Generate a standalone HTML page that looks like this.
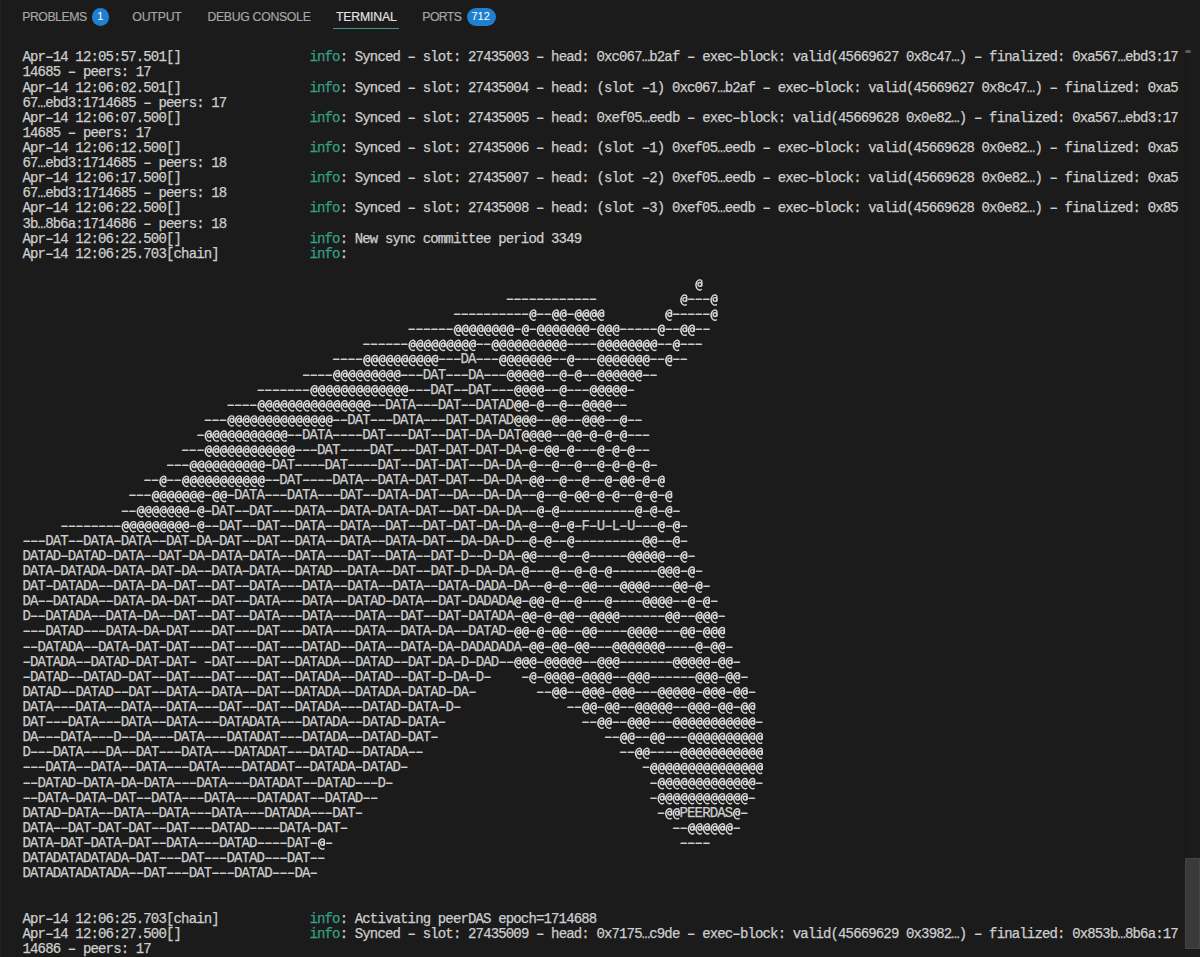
<!DOCTYPE html>
<html><head><meta charset="utf-8">
<style>
html,body{margin:0;padding:0;}
body{width:1200px;height:957px;background:#1b1b1b;position:relative;overflow:hidden;}
.tabs{position:absolute;left:0;top:0;width:1200px;height:40px;font-family:"Liberation Sans",sans-serif;font-size:12.3px;color:#a8a8a8;}
.tab{position:absolute;top:10px;line-height:14px;white-space:nowrap;-webkit-text-stroke:0.15px currentColor;}
.tab.act{color:#e4e4e4;}
.ul{position:absolute;left:333px;top:27.5px;width:66px;height:1.3px;background:#3a9e8c;}
.badge{position:absolute;top:8px;height:17.5px;border-radius:9px;background:#1f7fd0;color:#fff;font-family:"Liberation Sans",sans-serif;font-size:11px;line-height:17.5px;text-align:center;}
pre{position:absolute;left:22.5px;top:50.3px;margin:0;font-family:"Liberation Mono",monospace;font-size:14px;letter-spacing:-0.851px;line-height:15.11px;color:#cecece;white-space:pre;-webkit-text-stroke:0.25px currentColor;}
.i{color:#33a083;}
i{font-style:normal;text-shadow:0 -1px 0 rgba(206,206,206,0.5);}
.vl{position:absolute;left:1185px;top:49px;width:1px;height:810px;background:#141414;}
.mk{position:absolute;left:1185px;top:49.5px;width:6px;height:3.5px;border-radius:2px;background:#5a5a5a;}
.thumb{position:absolute;left:1185px;top:858px;width:15px;height:91px;background:#3a3a3a;box-shadow:inset 0 0 0 1px #444;}
</style></head><body>
<div class="tabs">
<div class="tab" style="left:22.2px;letter-spacing:-0.48px">PROBLEMS</div>
<div class="badge" style="left:91.5px;width:17.5px">1</div>
<div class="tab" style="left:132.3px;letter-spacing:-0.2px">OUTPUT</div>
<div class="tab" style="left:207.4px;letter-spacing:-0.32px">DEBUG CONSOLE</div>
<div class="tab act" style="left:336px;letter-spacing:-0.2px">TERMINAL</div>
<div class="ul"></div>
<div class="tab" style="left:422.3px;letter-spacing:-0.62px">PORTS</div>
<div class="badge" style="left:466.7px;width:29px;text-indent:-1px">712</div>
</div>
<div class="vl"></div>
<div style="position:absolute;left:0;top:0;width:1px;height:957px;background:#212121"></div>
<div class="mk"></div>
<div class="thumb"></div>
<pre>Apr<i>–</i>14 12:05:57.501[]                 <span class="i">info</span>: Synced <i>–</i> slot: 27435003 <i>–</i> head: 0xc067…b2af <i>–</i> exec<i>–</i>block: valid(45669627 0x8c47…) <i>–</i> finalized: 0xa567…ebd3:17
14685 <i>–</i> peers: 17
Apr<i>–</i>14 12:06:02.501[]                 <span class="i">info</span>: Synced <i>–</i> slot: 27435004 <i>–</i> head: (slot <i>–</i>1) 0xc067…b2af <i>–</i> exec<i>–</i>block: valid(45669627 0x8c47…) <i>–</i> finalized: 0xa5
67…ebd3:1714685 <i>–</i> peers: 17
Apr<i>–</i>14 12:06:07.500[]                 <span class="i">info</span>: Synced <i>–</i> slot: 27435005 <i>–</i> head: 0xef05…eedb <i>–</i> exec<i>–</i>block: valid(45669628 0x0e82…) <i>–</i> finalized: 0xa567…ebd3:17
14685 <i>–</i> peers: 17
Apr<i>–</i>14 12:06:12.500[]                 <span class="i">info</span>: Synced <i>–</i> slot: 27435006 <i>–</i> head: (slot <i>–</i>1) 0xef05…eedb <i>–</i> exec<i>–</i>block: valid(45669628 0x0e82…) <i>–</i> finalized: 0xa5
67…ebd3:1714685 <i>–</i> peers: 18
Apr<i>–</i>14 12:06:17.500[]                 <span class="i">info</span>: Synced <i>–</i> slot: 27435007 <i>–</i> head: (slot <i>–</i>2) 0xef05…eedb <i>–</i> exec<i>–</i>block: valid(45669628 0x0e82…) <i>–</i> finalized: 0xa5
67…ebd3:1714685 <i>–</i> peers: 18
Apr<i>–</i>14 12:06:22.500[]                 <span class="i">info</span>: Synced <i>–</i> slot: 27435008 <i>–</i> head: (slot <i>–</i>3) 0xef05…eedb <i>–</i> exec<i>–</i>block: valid(45669628 0x0e82…) <i>–</i> finalized: 0x85
3b…8b6a:1714686 <i>–</i> peers: 18
Apr<i>–</i>14 12:06:22.500[]                 <span class="i">info</span>: New sync committee period 3349
Apr<i>–</i>14 12:06:25.703[chain]            <span class="i">info</span>:

                                                                                          
                                                                <i>––––––––––––</i>            <i>–––</i> 
                                                         <i>––––––––––</i> <i>––</i>  <i>–</i>             <i>–––––</i> 
                                                   <i>––––––</i>        <i>–</i> <i>–</i>       <i>–</i>   <i>–––––</i> <i>––</i>  <i>––</i>
                                             <i>––––––</i>         <i>––</i>          <i>––––</i>        <i>––</i> <i>–––</i>
                                         <i>––––</i>          <i>–––</i>DA<i>–––</i>       <i>––</i> <i>–––</i>       <i>––</i> <i>––</i>
                                     <i>––––</i>         <i>–––</i>DAT<i>–––</i>DA<i>–––</i>     <i>––</i> <i>–</i> <i>––</i>      <i>––</i>
                               <i>–––––––</i>             <i>–––</i>DAT<i>––</i>DAT<i>–––</i>    <i>––</i> <i>–––</i>     <i>–</i>
                           <i>––––</i>               <i>––</i>DATA<i>–––</i>DAT<i>––</i>DATAD  <i>–</i> <i>––</i> <i>––</i>    <i>––</i>
                        <i>–––</i>              <i>––</i>DAT<i>–––</i>DATA<i>–––</i>DAT<i>–</i>DATAD   <i>––</i>  <i>––</i>   <i>––</i> <i>––</i>
                       <i>–</i>           <i>––</i>DATA<i>––––</i>DAT<i>–––</i>DAT<i>––</i>DAT<i>–</i>DA<i>–</i>DAT    <i>––</i>  <i>–</i> <i>–</i> <i>–</i> <i>–––</i>
                     <i>–––</i>            <i>–––</i>DAT<i>––––</i>DAT<i>–––</i>DAT<i>–</i>DAT<i>–</i>DAT<i>–</i>DA<i>–</i> <i>–</i>  <i>–</i> <i>–––</i> <i>–</i> <i>–</i> <i>––</i>
                   <i>–––</i>          <i>–</i>DAT<i>––––</i>DAT<i>––––</i>DAT<i>––</i>DAT<i>–</i>DAT<i>––</i>DA<i>–</i>DA<i>–</i> <i>––</i> <i>––</i> <i>––</i> <i>–</i> <i>–</i> <i>–</i> <i>–</i>
                <i>––</i> <i>––</i>           <i>––</i>DAT<i>––––</i>DATA<i>––</i>DATA<i>–</i>DAT<i>–</i>DAT<i>––</i>DA<i>–</i>DA<i>–</i>  <i>––</i> <i>––</i> <i>––</i> <i>–</i>  <i>–</i> <i>–</i> 
              <i>–––</i>       <i>–</i>  <i>–</i>DATA<i>–––</i>DATA<i>–––</i>DAT<i>––</i>DATA<i>–</i>DAT<i>––</i>DA<i>––</i>DA<i>–</i>DA<i>––</i> <i>––</i> <i>–</i>  <i>–</i> <i>–</i> <i>––</i> <i>–</i> <i>–</i> 
             <i>––</i>       <i>–</i> <i>–</i>DAT<i>––</i>DAT<i>–––</i>DATA<i>––</i>DATA<i>–</i>DATA<i>–</i>DAT<i>––</i>DAT<i>–</i>DA<i>–</i>DA<i>––</i> <i>–</i> <i>––––––––––</i> <i>–</i> <i>–</i> <i>–</i>
     <i>––––––––</i>         <i>–</i> <i>––</i>DAT<i>––</i>DAT<i>––</i>DATA<i>––</i>DATA<i>––</i>DAT<i>––</i>DAT<i>–</i>DAT<i>–</i>DA<i>–</i>DA<i>–</i> <i>––</i> <i>–</i> <i>–</i>F<i>–</i>U<i>–</i>L<i>–</i>U<i>–––</i> <i>–</i> <i>–</i>
<i>–––</i>DAT<i>––</i>DATA<i>–</i>DATA<i>––</i>DAT<i>–</i>DA<i>–</i>DAT<i>––</i>DAT<i>––</i>DATA<i>––</i>DATA<i>––</i>DATA<i>–</i>DAT<i>––</i>DA<i>–</i>DA<i>–</i>D<i>––</i> <i>–</i> <i>––</i> <i>–––––––––</i>  <i>––</i> <i>–</i>
DATAD<i>–</i>DATAD<i>–</i>DATA<i>––</i>DAT<i>–</i>DA<i>–</i>DATA<i>–</i>DATA<i>––</i>DATA<i>–––</i>DAT<i>––</i>DATA<i>––</i>DAT<i>–</i>D<i>––</i>D<i>–</i>DA<i>–</i>  <i>–––</i> <i>––</i> <i>–––––</i>     <i>––</i> <i>–</i>
DATA<i>–</i>DATADA<i>–</i>DATA<i>–</i>DAT<i>–</i>DA<i>––</i>DATA<i>–</i>DATA<i>––</i>DATAD<i>––</i>DATA<i>––</i>DAT<i>––</i>DAT<i>–</i>D<i>–</i>DA<i>–</i>DA<i>–</i> <i>–––</i> <i>––</i> <i>–</i> <i>–</i> <i>––––––</i>   <i>–</i> <i>–</i>
DAT<i>–</i>DATADA<i>––</i>DATA<i>–</i>DA<i>–</i>DAT<i>––</i>DAT<i>––</i>DATA<i>–––</i>DATA<i>––</i>DATA<i>––</i>DATA<i>––</i>DATA<i>–</i>DADA<i>–</i>DA<i>––</i> <i>–</i> <i>––</i>  <i>–––</i>    <i>–––</i>  <i>–</i> <i>–</i>
DA<i>––</i>DATADA<i>––</i>DATA<i>–</i>DA<i>–</i>DAT<i>––</i>DAT<i>––</i>DATA<i>–––</i>DATA<i>––</i>DATAD<i>–</i>DATA<i>––</i>DAT<i>–</i>DADADA <i>–</i>  <i>–</i> <i>––</i> <i>–––</i> <i>––––</i>    <i>––</i> <i>–</i> <i>–</i>
D<i>––</i>DATADA<i>––</i>DATA<i>–</i>DA<i>––</i>DAT<i>––</i>DAT<i>––</i>DATA<i>–––</i>DATA<i>–––</i>DATA<i>––</i>DAT<i>––</i>DAT<i>–</i>DATADA<i>–</i>  <i>–</i> <i>–</i>  <i>––</i>    <i>––––––</i>  <i>––</i>   <i>–</i>
<i>–––</i>DATAD<i>–––</i>DATA<i>–</i>DA<i>–</i>DAT<i>–––</i>DAT<i>–––</i>DAT<i>–––</i>DATA<i>–––</i>DATA<i>––</i>DATA<i>–</i>DA<i>––</i>DATAD<i>–</i>  <i>–</i> <i>–</i>  <i>––</i>  <i>––––</i>    <i>–––</i>  <i>–</i>   
<i>––</i>DATADA<i>––</i>DATA<i>–</i>DAT<i>–</i>DAT<i>–––</i>DAT<i>–––</i>DAT<i>–––</i>DATAD<i>––</i>DATA<i>––</i>DATA<i>–</i>DA<i>–</i>DADADADA<i>–</i>  <i>–</i>  <i>–</i>  <i>–––</i>       <i>––––</i> <i>–</i>  <i>–</i>
<i>–</i>DATADA<i>––</i>DATAD<i>–</i>DAT<i>–</i>DAT<i>–</i> <i>–</i>DAT<i>–––</i>DAT<i>––</i>DATADA<i>––</i>DATAD<i>––</i>DAT<i>–</i>DA<i>–</i>D<i>–</i>DAD<i>––</i>   <i>–</i>     <i>––</i>   <i>–––––––</i>     <i>–</i>  <i>–</i>
<i>–</i>DATAD<i>––</i>DATAD<i>–</i>DAT<i>––</i>DAT<i>–––</i>DAT<i>–––</i>DAT<i>––</i>DATADA<i>––</i>DATAD<i>––</i>DAT<i>–</i>D<i>–</i>DA<i>–</i>D<i>–</i>    <i>–</i> <i>–</i>    <i>–</i>    <i>––</i>   <i>––––––</i>   <i>–</i>  <i>–</i>
DATAD<i>––</i>DATAD<i>––</i>DAT<i>––</i>DATA<i>––</i>DATA<i>––</i>DAT<i>––</i>DATADA<i>––</i>DATADA<i>–</i>DATAD<i>–</i>DA<i>–</i>        <i>––</i>  <i>––</i>   <i>–</i>   <i>–––</i>     <i>–</i>   <i>–</i>  <i>–</i>
DATA<i>–––</i>DATA<i>––</i>DATA<i>––</i>DATA<i>–––</i>DAT<i>––</i>DAT<i>––</i>DATADA<i>–––</i>DATAD<i>–</i>DATA<i>–</i>D<i>–</i>              <i>––</i>  <i>–</i>  <i>––</i>     <i>––</i>   <i>–</i>  <i>–</i>  
DAT<i>–––</i>DATA<i>–––</i>DATA<i>––</i>DATA<i>–––</i>DATADATA<i>–––</i>DATADA<i>––</i>DATAD<i>–</i>DATA<i>–</i>                  <i>––</i>  <i>––</i>   <i>–––</i>           <i>–</i>
DA<i>–––</i>DATA<i>–––</i>D<i>––</i>DA<i>–––</i>DATA<i>–––</i>DATADAT<i>–––</i>DATADA<i>––</i>DATAD<i>–</i>DAT<i>–</i>                      <i>––</i>  <i>––</i>  <i>–––</i>          
D<i>–––</i>DATA<i>–––</i>DA<i>––</i>DAT<i>–––</i>DATA<i>–––</i>DATADAT<i>–––</i>DATAD<i>––</i>DATADA<i>––</i>                          <i>––</i>  <i>––––</i>           
<i>–––</i>DATA<i>––</i>DATA<i>––</i>DATA<i>–––</i>DATA<i>–––</i>DATADAT<i>––</i>DATADA<i>–</i>DATAD<i>–</i>                               <i>–</i>               
<i>––</i>DATAD<i>–</i>DATA<i>–</i>DA<i>–</i>DATA<i>–––</i>DATA<i>–––</i>DATADAT<i>––</i>DATAD<i>–––</i>D<i>–</i>                                  <i>–</i>             <i>–</i>
<i>––</i>DATA<i>–</i>DATA<i>–</i>DAT<i>––</i>DATA<i>–––</i>DATA<i>–––</i>DATADAT<i>––</i>DATAD<i>––</i>                                    <i>–</i>            <i>–</i>
DATAD<i>–</i>DATA<i>––</i>DATA<i>––</i>DATA<i>–––</i>DATA<i>–––</i>DATADA<i>–––</i>DAT<i>–</i>                                       <i>–</i>  PEERDAS <i>–</i>
DATA<i>––</i>DAT<i>–</i>DAT<i>–</i>DAT<i>––</i>DAT<i>–––</i>DATAD<i>––––</i>DATA<i>–</i>DAT<i>–</i>                                           <i>––</i>      <i>–</i>
DATA<i>–</i>DAT<i>–</i>DATA<i>–</i>DAT<i>––</i>DATA<i>–––</i>DATAD<i>––––</i>DAT<i>–</i> <i>–</i>                                              <i>––––</i>
DATADATADATADA<i>–</i>DAT<i>–––</i>DAT<i>–––</i>DATAD<i>–––</i>DAT<i>––</i>
DATADATADATADA<i>––</i>DAT<i>–––</i>DAT<i>–––</i>DATAD<i>–––</i>DA<i>–</i>


Apr<i>–</i>14 12:06:25.703[chain]            <span class="i">info</span>: Activating peerDAS epoch=1714688
Apr<i>–</i>14 12:06:27.500[]                 <span class="i">info</span>: Synced <i>–</i> slot: 27435009 <i>–</i> head: 0x7175…c9de <i>–</i> exec<i>–</i>block: valid(45669629 0x3982…) <i>–</i> finalized: 0x853b…8b6a:17
14686 <i>–</i> peers: 17</pre>
<svg style="position:absolute;left:22.5px;top:276.95px;overflow:visible" width="800" height="620"><defs><g id="a" fill="none" stroke="#d8d8d8" stroke-width="1.4"><path d="M6.9 3.6A3.75 5.1 0 1 0 6.9 12.3"/><circle cx="5.0" cy="7.4" r="1.85"/><path d="M6.9 3.6V9.3"/></g></defs><use href="#a" x="671.86" y="0.00"/><use href="#a" x="656.76" y="15.11"/><use href="#a" x="686.96" y="15.11"/><use href="#a" x="505.78" y="30.22"/><use href="#a" x="528.43" y="30.22"/><use href="#a" x="535.98" y="30.22"/><use href="#a" x="551.08" y="30.22"/><use href="#a" x="558.63" y="30.22"/><use href="#a" x="566.18" y="30.22"/><use href="#a" x="573.72" y="30.22"/><use href="#a" x="641.67" y="30.22"/><use href="#a" x="686.96" y="30.22"/><use href="#a" x="430.29" y="45.33"/><use href="#a" x="437.84" y="45.33"/><use href="#a" x="445.39" y="45.33"/><use href="#a" x="452.94" y="45.33"/><use href="#a" x="460.49" y="45.33"/><use href="#a" x="468.04" y="45.33"/><use href="#a" x="475.59" y="45.33"/><use href="#a" x="483.14" y="45.33"/><use href="#a" x="498.23" y="45.33"/><use href="#a" x="513.33" y="45.33"/><use href="#a" x="520.88" y="45.33"/><use href="#a" x="528.43" y="45.33"/><use href="#a" x="535.98" y="45.33"/><use href="#a" x="543.53" y="45.33"/><use href="#a" x="551.08" y="45.33"/><use href="#a" x="558.63" y="45.33"/><use href="#a" x="573.72" y="45.33"/><use href="#a" x="581.27" y="45.33"/><use href="#a" x="588.82" y="45.33"/><use href="#a" x="634.12" y="45.33"/><use href="#a" x="656.76" y="45.33"/><use href="#a" x="664.31" y="45.33"/><use href="#a" x="385.00" y="60.44"/><use href="#a" x="392.55" y="60.44"/><use href="#a" x="400.10" y="60.44"/><use href="#a" x="407.65" y="60.44"/><use href="#a" x="415.19" y="60.44"/><use href="#a" x="422.74" y="60.44"/><use href="#a" x="430.29" y="60.44"/><use href="#a" x="437.84" y="60.44"/><use href="#a" x="445.39" y="60.44"/><use href="#a" x="468.04" y="60.44"/><use href="#a" x="475.59" y="60.44"/><use href="#a" x="483.14" y="60.44"/><use href="#a" x="490.69" y="60.44"/><use href="#a" x="498.23" y="60.44"/><use href="#a" x="505.78" y="60.44"/><use href="#a" x="513.33" y="60.44"/><use href="#a" x="520.88" y="60.44"/><use href="#a" x="528.43" y="60.44"/><use href="#a" x="535.98" y="60.44"/><use href="#a" x="573.72" y="60.44"/><use href="#a" x="581.27" y="60.44"/><use href="#a" x="588.82" y="60.44"/><use href="#a" x="596.37" y="60.44"/><use href="#a" x="603.92" y="60.44"/><use href="#a" x="611.47" y="60.44"/><use href="#a" x="619.02" y="60.44"/><use href="#a" x="626.57" y="60.44"/><use href="#a" x="649.21" y="60.44"/><use href="#a" x="339.71" y="75.55"/><use href="#a" x="347.25" y="75.55"/><use href="#a" x="354.80" y="75.55"/><use href="#a" x="362.35" y="75.55"/><use href="#a" x="369.90" y="75.55"/><use href="#a" x="377.45" y="75.55"/><use href="#a" x="385.00" y="75.55"/><use href="#a" x="392.55" y="75.55"/><use href="#a" x="400.10" y="75.55"/><use href="#a" x="407.65" y="75.55"/><use href="#a" x="475.59" y="75.55"/><use href="#a" x="483.14" y="75.55"/><use href="#a" x="490.69" y="75.55"/><use href="#a" x="498.23" y="75.55"/><use href="#a" x="505.78" y="75.55"/><use href="#a" x="513.33" y="75.55"/><use href="#a" x="520.88" y="75.55"/><use href="#a" x="543.53" y="75.55"/><use href="#a" x="573.72" y="75.55"/><use href="#a" x="581.27" y="75.55"/><use href="#a" x="588.82" y="75.55"/><use href="#a" x="596.37" y="75.55"/><use href="#a" x="603.92" y="75.55"/><use href="#a" x="611.47" y="75.55"/><use href="#a" x="619.02" y="75.55"/><use href="#a" x="641.67" y="75.55"/><use href="#a" x="309.51" y="90.66"/><use href="#a" x="317.06" y="90.66"/><use href="#a" x="324.61" y="90.66"/><use href="#a" x="332.16" y="90.66"/><use href="#a" x="339.71" y="90.66"/><use href="#a" x="347.25" y="90.66"/><use href="#a" x="354.80" y="90.66"/><use href="#a" x="362.35" y="90.66"/><use href="#a" x="369.90" y="90.66"/><use href="#a" x="483.14" y="90.66"/><use href="#a" x="490.69" y="90.66"/><use href="#a" x="498.23" y="90.66"/><use href="#a" x="505.78" y="90.66"/><use href="#a" x="513.33" y="90.66"/><use href="#a" x="535.98" y="90.66"/><use href="#a" x="551.08" y="90.66"/><use href="#a" x="573.72" y="90.66"/><use href="#a" x="581.27" y="90.66"/><use href="#a" x="588.82" y="90.66"/><use href="#a" x="596.37" y="90.66"/><use href="#a" x="603.92" y="90.66"/><use href="#a" x="611.47" y="90.66"/><use href="#a" x="286.86" y="105.77"/><use href="#a" x="294.41" y="105.77"/><use href="#a" x="301.96" y="105.77"/><use href="#a" x="309.51" y="105.77"/><use href="#a" x="317.06" y="105.77"/><use href="#a" x="324.61" y="105.77"/><use href="#a" x="332.16" y="105.77"/><use href="#a" x="339.71" y="105.77"/><use href="#a" x="347.25" y="105.77"/><use href="#a" x="354.80" y="105.77"/><use href="#a" x="362.35" y="105.77"/><use href="#a" x="369.90" y="105.77"/><use href="#a" x="377.45" y="105.77"/><use href="#a" x="490.69" y="105.77"/><use href="#a" x="498.23" y="105.77"/><use href="#a" x="505.78" y="105.77"/><use href="#a" x="513.33" y="105.77"/><use href="#a" x="535.98" y="105.77"/><use href="#a" x="566.18" y="105.77"/><use href="#a" x="573.72" y="105.77"/><use href="#a" x="581.27" y="105.77"/><use href="#a" x="588.82" y="105.77"/><use href="#a" x="596.37" y="105.77"/><use href="#a" x="234.02" y="120.88"/><use href="#a" x="241.57" y="120.88"/><use href="#a" x="249.12" y="120.88"/><use href="#a" x="256.67" y="120.88"/><use href="#a" x="264.22" y="120.88"/><use href="#a" x="271.76" y="120.88"/><use href="#a" x="279.31" y="120.88"/><use href="#a" x="286.86" y="120.88"/><use href="#a" x="294.41" y="120.88"/><use href="#a" x="301.96" y="120.88"/><use href="#a" x="309.51" y="120.88"/><use href="#a" x="317.06" y="120.88"/><use href="#a" x="324.61" y="120.88"/><use href="#a" x="332.16" y="120.88"/><use href="#a" x="339.71" y="120.88"/><use href="#a" x="490.69" y="120.88"/><use href="#a" x="498.23" y="120.88"/><use href="#a" x="513.33" y="120.88"/><use href="#a" x="535.98" y="120.88"/><use href="#a" x="558.63" y="120.88"/><use href="#a" x="566.18" y="120.88"/><use href="#a" x="573.72" y="120.88"/><use href="#a" x="581.27" y="120.88"/><use href="#a" x="203.82" y="135.99"/><use href="#a" x="211.37" y="135.99"/><use href="#a" x="218.92" y="135.99"/><use href="#a" x="226.47" y="135.99"/><use href="#a" x="234.02" y="135.99"/><use href="#a" x="241.57" y="135.99"/><use href="#a" x="249.12" y="135.99"/><use href="#a" x="256.67" y="135.99"/><use href="#a" x="264.22" y="135.99"/><use href="#a" x="271.76" y="135.99"/><use href="#a" x="279.31" y="135.99"/><use href="#a" x="286.86" y="135.99"/><use href="#a" x="294.41" y="135.99"/><use href="#a" x="301.96" y="135.99"/><use href="#a" x="490.69" y="135.99"/><use href="#a" x="498.23" y="135.99"/><use href="#a" x="505.78" y="135.99"/><use href="#a" x="528.43" y="135.99"/><use href="#a" x="535.98" y="135.99"/><use href="#a" x="558.63" y="135.99"/><use href="#a" x="566.18" y="135.99"/><use href="#a" x="573.72" y="135.99"/><use href="#a" x="596.37" y="135.99"/><use href="#a" x="181.18" y="151.10"/><use href="#a" x="188.73" y="151.10"/><use href="#a" x="196.27" y="151.10"/><use href="#a" x="203.82" y="151.10"/><use href="#a" x="211.37" y="151.10"/><use href="#a" x="218.92" y="151.10"/><use href="#a" x="226.47" y="151.10"/><use href="#a" x="234.02" y="151.10"/><use href="#a" x="241.57" y="151.10"/><use href="#a" x="249.12" y="151.10"/><use href="#a" x="256.67" y="151.10"/><use href="#a" x="498.23" y="151.10"/><use href="#a" x="505.78" y="151.10"/><use href="#a" x="513.33" y="151.10"/><use href="#a" x="520.88" y="151.10"/><use href="#a" x="543.53" y="151.10"/><use href="#a" x="551.08" y="151.10"/><use href="#a" x="566.18" y="151.10"/><use href="#a" x="581.27" y="151.10"/><use href="#a" x="596.37" y="151.10"/><use href="#a" x="181.18" y="166.21"/><use href="#a" x="188.73" y="166.21"/><use href="#a" x="196.27" y="166.21"/><use href="#a" x="203.82" y="166.21"/><use href="#a" x="211.37" y="166.21"/><use href="#a" x="218.92" y="166.21"/><use href="#a" x="226.47" y="166.21"/><use href="#a" x="234.02" y="166.21"/><use href="#a" x="241.57" y="166.21"/><use href="#a" x="249.12" y="166.21"/><use href="#a" x="256.67" y="166.21"/><use href="#a" x="264.22" y="166.21"/><use href="#a" x="505.78" y="166.21"/><use href="#a" x="520.88" y="166.21"/><use href="#a" x="528.43" y="166.21"/><use href="#a" x="543.53" y="166.21"/><use href="#a" x="573.72" y="166.21"/><use href="#a" x="588.82" y="166.21"/><use href="#a" x="603.92" y="166.21"/><use href="#a" x="166.08" y="181.32"/><use href="#a" x="173.63" y="181.32"/><use href="#a" x="181.18" y="181.32"/><use href="#a" x="188.73" y="181.32"/><use href="#a" x="196.27" y="181.32"/><use href="#a" x="203.82" y="181.32"/><use href="#a" x="211.37" y="181.32"/><use href="#a" x="218.92" y="181.32"/><use href="#a" x="226.47" y="181.32"/><use href="#a" x="234.02" y="181.32"/><use href="#a" x="505.78" y="181.32"/><use href="#a" x="528.43" y="181.32"/><use href="#a" x="551.08" y="181.32"/><use href="#a" x="573.72" y="181.32"/><use href="#a" x="588.82" y="181.32"/><use href="#a" x="603.92" y="181.32"/><use href="#a" x="619.02" y="181.32"/><use href="#a" x="135.88" y="196.43"/><use href="#a" x="158.53" y="196.43"/><use href="#a" x="166.08" y="196.43"/><use href="#a" x="173.63" y="196.43"/><use href="#a" x="181.18" y="196.43"/><use href="#a" x="188.73" y="196.43"/><use href="#a" x="196.27" y="196.43"/><use href="#a" x="203.82" y="196.43"/><use href="#a" x="211.37" y="196.43"/><use href="#a" x="218.92" y="196.43"/><use href="#a" x="226.47" y="196.43"/><use href="#a" x="234.02" y="196.43"/><use href="#a" x="505.78" y="196.43"/><use href="#a" x="513.33" y="196.43"/><use href="#a" x="535.98" y="196.43"/><use href="#a" x="558.63" y="196.43"/><use href="#a" x="581.27" y="196.43"/><use href="#a" x="596.37" y="196.43"/><use href="#a" x="603.92" y="196.43"/><use href="#a" x="619.02" y="196.43"/><use href="#a" x="634.12" y="196.43"/><use href="#a" x="128.33" y="211.54"/><use href="#a" x="135.88" y="211.54"/><use href="#a" x="143.43" y="211.54"/><use href="#a" x="150.98" y="211.54"/><use href="#a" x="158.53" y="211.54"/><use href="#a" x="166.08" y="211.54"/><use href="#a" x="173.63" y="211.54"/><use href="#a" x="188.73" y="211.54"/><use href="#a" x="196.27" y="211.54"/><use href="#a" x="513.33" y="211.54"/><use href="#a" x="535.98" y="211.54"/><use href="#a" x="551.08" y="211.54"/><use href="#a" x="558.63" y="211.54"/><use href="#a" x="573.72" y="211.54"/><use href="#a" x="588.82" y="211.54"/><use href="#a" x="611.47" y="211.54"/><use href="#a" x="626.57" y="211.54"/><use href="#a" x="641.67" y="211.54"/><use href="#a" x="113.23" y="226.65"/><use href="#a" x="120.78" y="226.65"/><use href="#a" x="128.33" y="226.65"/><use href="#a" x="135.88" y="226.65"/><use href="#a" x="143.43" y="226.65"/><use href="#a" x="150.98" y="226.65"/><use href="#a" x="158.53" y="226.65"/><use href="#a" x="173.63" y="226.65"/><use href="#a" x="513.33" y="226.65"/><use href="#a" x="528.43" y="226.65"/><use href="#a" x="611.47" y="226.65"/><use href="#a" x="626.57" y="226.65"/><use href="#a" x="641.67" y="226.65"/><use href="#a" x="98.14" y="241.76"/><use href="#a" x="105.69" y="241.76"/><use href="#a" x="113.23" y="241.76"/><use href="#a" x="120.78" y="241.76"/><use href="#a" x="128.33" y="241.76"/><use href="#a" x="135.88" y="241.76"/><use href="#a" x="143.43" y="241.76"/><use href="#a" x="150.98" y="241.76"/><use href="#a" x="158.53" y="241.76"/><use href="#a" x="173.63" y="241.76"/><use href="#a" x="505.78" y="241.76"/><use href="#a" x="528.43" y="241.76"/><use href="#a" x="543.53" y="241.76"/><use href="#a" x="634.12" y="241.76"/><use href="#a" x="649.21" y="241.76"/><use href="#a" x="505.78" y="256.87"/><use href="#a" x="520.88" y="256.87"/><use href="#a" x="543.53" y="256.87"/><use href="#a" x="619.02" y="256.87"/><use href="#a" x="626.57" y="256.87"/><use href="#a" x="649.21" y="256.87"/><use href="#a" x="498.23" y="271.98"/><use href="#a" x="505.78" y="271.98"/><use href="#a" x="535.98" y="271.98"/><use href="#a" x="558.63" y="271.98"/><use href="#a" x="603.92" y="271.98"/><use href="#a" x="611.47" y="271.98"/><use href="#a" x="619.02" y="271.98"/><use href="#a" x="626.57" y="271.98"/><use href="#a" x="634.12" y="271.98"/><use href="#a" x="656.76" y="271.98"/><use href="#a" x="498.23" y="287.09"/><use href="#a" x="528.43" y="287.09"/><use href="#a" x="551.08" y="287.09"/><use href="#a" x="566.18" y="287.09"/><use href="#a" x="581.27" y="287.09"/><use href="#a" x="634.12" y="287.09"/><use href="#a" x="641.67" y="287.09"/><use href="#a" x="649.21" y="287.09"/><use href="#a" x="664.31" y="287.09"/><use href="#a" x="520.88" y="302.20"/><use href="#a" x="535.98" y="302.20"/><use href="#a" x="558.63" y="302.20"/><use href="#a" x="566.18" y="302.20"/><use href="#a" x="596.37" y="302.20"/><use href="#a" x="603.92" y="302.20"/><use href="#a" x="611.47" y="302.20"/><use href="#a" x="619.02" y="302.20"/><use href="#a" x="649.21" y="302.20"/><use href="#a" x="656.76" y="302.20"/><use href="#a" x="671.86" y="302.20"/><use href="#a" x="490.69" y="317.31"/><use href="#a" x="505.78" y="317.31"/><use href="#a" x="513.33" y="317.31"/><use href="#a" x="528.43" y="317.31"/><use href="#a" x="551.08" y="317.31"/><use href="#a" x="581.27" y="317.31"/><use href="#a" x="619.02" y="317.31"/><use href="#a" x="626.57" y="317.31"/><use href="#a" x="634.12" y="317.31"/><use href="#a" x="641.67" y="317.31"/><use href="#a" x="664.31" y="317.31"/><use href="#a" x="679.41" y="317.31"/><use href="#a" x="498.23" y="332.42"/><use href="#a" x="505.78" y="332.42"/><use href="#a" x="520.88" y="332.42"/><use href="#a" x="535.98" y="332.42"/><use href="#a" x="543.53" y="332.42"/><use href="#a" x="566.18" y="332.42"/><use href="#a" x="573.72" y="332.42"/><use href="#a" x="581.27" y="332.42"/><use href="#a" x="588.82" y="332.42"/><use href="#a" x="641.67" y="332.42"/><use href="#a" x="649.21" y="332.42"/><use href="#a" x="671.86" y="332.42"/><use href="#a" x="679.41" y="332.42"/><use href="#a" x="686.96" y="332.42"/><use href="#a" x="490.69" y="347.53"/><use href="#a" x="498.23" y="347.53"/><use href="#a" x="513.33" y="347.53"/><use href="#a" x="528.43" y="347.53"/><use href="#a" x="535.98" y="347.53"/><use href="#a" x="558.63" y="347.53"/><use href="#a" x="566.18" y="347.53"/><use href="#a" x="603.92" y="347.53"/><use href="#a" x="611.47" y="347.53"/><use href="#a" x="619.02" y="347.53"/><use href="#a" x="626.57" y="347.53"/><use href="#a" x="656.76" y="347.53"/><use href="#a" x="664.31" y="347.53"/><use href="#a" x="679.41" y="347.53"/><use href="#a" x="686.96" y="347.53"/><use href="#a" x="694.51" y="347.53"/><use href="#a" x="505.78" y="362.64"/><use href="#a" x="513.33" y="362.64"/><use href="#a" x="528.43" y="362.64"/><use href="#a" x="535.98" y="362.64"/><use href="#a" x="551.08" y="362.64"/><use href="#a" x="558.63" y="362.64"/><use href="#a" x="588.82" y="362.64"/><use href="#a" x="596.37" y="362.64"/><use href="#a" x="603.92" y="362.64"/><use href="#a" x="611.47" y="362.64"/><use href="#a" x="619.02" y="362.64"/><use href="#a" x="626.57" y="362.64"/><use href="#a" x="634.12" y="362.64"/><use href="#a" x="671.86" y="362.64"/><use href="#a" x="686.96" y="362.64"/><use href="#a" x="694.51" y="362.64"/><use href="#a" x="490.69" y="377.75"/><use href="#a" x="498.23" y="377.75"/><use href="#a" x="505.78" y="377.75"/><use href="#a" x="520.88" y="377.75"/><use href="#a" x="528.43" y="377.75"/><use href="#a" x="535.98" y="377.75"/><use href="#a" x="543.53" y="377.75"/><use href="#a" x="551.08" y="377.75"/><use href="#a" x="573.72" y="377.75"/><use href="#a" x="581.27" y="377.75"/><use href="#a" x="588.82" y="377.75"/><use href="#a" x="649.21" y="377.75"/><use href="#a" x="656.76" y="377.75"/><use href="#a" x="664.31" y="377.75"/><use href="#a" x="671.86" y="377.75"/><use href="#a" x="679.41" y="377.75"/><use href="#a" x="694.51" y="377.75"/><use href="#a" x="702.06" y="377.75"/><use href="#a" x="505.78" y="392.86"/><use href="#a" x="520.88" y="392.86"/><use href="#a" x="528.43" y="392.86"/><use href="#a" x="535.98" y="392.86"/><use href="#a" x="543.53" y="392.86"/><use href="#a" x="558.63" y="392.86"/><use href="#a" x="566.18" y="392.86"/><use href="#a" x="573.72" y="392.86"/><use href="#a" x="581.27" y="392.86"/><use href="#a" x="603.92" y="392.86"/><use href="#a" x="611.47" y="392.86"/><use href="#a" x="619.02" y="392.86"/><use href="#a" x="671.86" y="392.86"/><use href="#a" x="679.41" y="392.86"/><use href="#a" x="686.96" y="392.86"/><use href="#a" x="702.06" y="392.86"/><use href="#a" x="709.61" y="392.86"/><use href="#a" x="528.43" y="407.97"/><use href="#a" x="535.98" y="407.97"/><use href="#a" x="558.63" y="407.97"/><use href="#a" x="566.18" y="407.97"/><use href="#a" x="573.72" y="407.97"/><use href="#a" x="588.82" y="407.97"/><use href="#a" x="596.37" y="407.97"/><use href="#a" x="603.92" y="407.97"/><use href="#a" x="634.12" y="407.97"/><use href="#a" x="641.67" y="407.97"/><use href="#a" x="649.21" y="407.97"/><use href="#a" x="656.76" y="407.97"/><use href="#a" x="664.31" y="407.97"/><use href="#a" x="679.41" y="407.97"/><use href="#a" x="686.96" y="407.97"/><use href="#a" x="694.51" y="407.97"/><use href="#a" x="709.61" y="407.97"/><use href="#a" x="717.16" y="407.97"/><use href="#a" x="558.63" y="423.08"/><use href="#a" x="566.18" y="423.08"/><use href="#a" x="581.27" y="423.08"/><use href="#a" x="588.82" y="423.08"/><use href="#a" x="611.47" y="423.08"/><use href="#a" x="619.02" y="423.08"/><use href="#a" x="626.57" y="423.08"/><use href="#a" x="634.12" y="423.08"/><use href="#a" x="641.67" y="423.08"/><use href="#a" x="664.31" y="423.08"/><use href="#a" x="671.86" y="423.08"/><use href="#a" x="679.41" y="423.08"/><use href="#a" x="694.51" y="423.08"/><use href="#a" x="702.06" y="423.08"/><use href="#a" x="717.16" y="423.08"/><use href="#a" x="724.70" y="423.08"/><use href="#a" x="573.72" y="438.19"/><use href="#a" x="581.27" y="438.19"/><use href="#a" x="603.92" y="438.19"/><use href="#a" x="611.47" y="438.19"/><use href="#a" x="619.02" y="438.19"/><use href="#a" x="649.21" y="438.19"/><use href="#a" x="656.76" y="438.19"/><use href="#a" x="664.31" y="438.19"/><use href="#a" x="671.86" y="438.19"/><use href="#a" x="679.41" y="438.19"/><use href="#a" x="686.96" y="438.19"/><use href="#a" x="694.51" y="438.19"/><use href="#a" x="702.06" y="438.19"/><use href="#a" x="709.61" y="438.19"/><use href="#a" x="717.16" y="438.19"/><use href="#a" x="724.70" y="438.19"/><use href="#a" x="596.37" y="453.30"/><use href="#a" x="603.92" y="453.30"/><use href="#a" x="626.57" y="453.30"/><use href="#a" x="634.12" y="453.30"/><use href="#a" x="664.31" y="453.30"/><use href="#a" x="671.86" y="453.30"/><use href="#a" x="679.41" y="453.30"/><use href="#a" x="686.96" y="453.30"/><use href="#a" x="694.51" y="453.30"/><use href="#a" x="702.06" y="453.30"/><use href="#a" x="709.61" y="453.30"/><use href="#a" x="717.16" y="453.30"/><use href="#a" x="724.70" y="453.30"/><use href="#a" x="732.25" y="453.30"/><use href="#a" x="611.47" y="468.41"/><use href="#a" x="619.02" y="468.41"/><use href="#a" x="656.76" y="468.41"/><use href="#a" x="664.31" y="468.41"/><use href="#a" x="671.86" y="468.41"/><use href="#a" x="679.41" y="468.41"/><use href="#a" x="686.96" y="468.41"/><use href="#a" x="694.51" y="468.41"/><use href="#a" x="702.06" y="468.41"/><use href="#a" x="709.61" y="468.41"/><use href="#a" x="717.16" y="468.41"/><use href="#a" x="724.70" y="468.41"/><use href="#a" x="732.25" y="468.41"/><use href="#a" x="626.57" y="483.52"/><use href="#a" x="634.12" y="483.52"/><use href="#a" x="641.67" y="483.52"/><use href="#a" x="649.21" y="483.52"/><use href="#a" x="656.76" y="483.52"/><use href="#a" x="664.31" y="483.52"/><use href="#a" x="671.86" y="483.52"/><use href="#a" x="679.41" y="483.52"/><use href="#a" x="686.96" y="483.52"/><use href="#a" x="694.51" y="483.52"/><use href="#a" x="702.06" y="483.52"/><use href="#a" x="709.61" y="483.52"/><use href="#a" x="717.16" y="483.52"/><use href="#a" x="724.70" y="483.52"/><use href="#a" x="732.25" y="483.52"/><use href="#a" x="634.12" y="498.63"/><use href="#a" x="641.67" y="498.63"/><use href="#a" x="649.21" y="498.63"/><use href="#a" x="656.76" y="498.63"/><use href="#a" x="664.31" y="498.63"/><use href="#a" x="671.86" y="498.63"/><use href="#a" x="679.41" y="498.63"/><use href="#a" x="686.96" y="498.63"/><use href="#a" x="694.51" y="498.63"/><use href="#a" x="702.06" y="498.63"/><use href="#a" x="709.61" y="498.63"/><use href="#a" x="717.16" y="498.63"/><use href="#a" x="724.70" y="498.63"/><use href="#a" x="634.12" y="513.74"/><use href="#a" x="641.67" y="513.74"/><use href="#a" x="649.21" y="513.74"/><use href="#a" x="656.76" y="513.74"/><use href="#a" x="664.31" y="513.74"/><use href="#a" x="671.86" y="513.74"/><use href="#a" x="679.41" y="513.74"/><use href="#a" x="686.96" y="513.74"/><use href="#a" x="694.51" y="513.74"/><use href="#a" x="702.06" y="513.74"/><use href="#a" x="709.61" y="513.74"/><use href="#a" x="717.16" y="513.74"/><use href="#a" x="641.67" y="528.85"/><use href="#a" x="649.21" y="528.85"/><use href="#a" x="709.61" y="528.85"/><use href="#a" x="664.31" y="543.96"/><use href="#a" x="671.86" y="543.96"/><use href="#a" x="679.41" y="543.96"/><use href="#a" x="686.96" y="543.96"/><use href="#a" x="694.51" y="543.96"/><use href="#a" x="702.06" y="543.96"/><use href="#a" x="294.41" y="559.07"/></svg>
</body></html>
